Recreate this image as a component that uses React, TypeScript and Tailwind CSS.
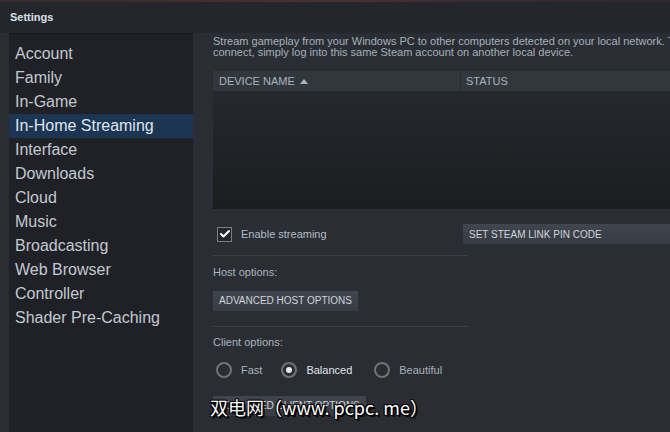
import { Check } from 'lucide-react';

const secciones = [
  'Account',
  'Family',
  'In-Game',
  'In-Home Streaming',
  'Interface',
  'Downloads',
  'Cloud',
  'Music',
  'Broadcasting',
  'Web Browser',
  'Controller',
  'Shader Pre-Caching',
];

function Radio({ label, checked, className = '' }: { label: string; checked?: boolean; className?: string }) {
  return (
    <div className={`flex items-center ${className}`}>
      <span className="w-[16px] h-[16px] rounded-full border-2 border-[#6f737a] flex items-center justify-center">
        {checked && <span className="w-[6px] h-[6px] rounded-full bg-[#e8eaec]" />}
      </span>
      <span className={`ml-[9px] text-[11px] ${checked ? 'text-[#e2e5e8]' : 'text-[#a9b2bd]'}`}>{label}</span>
    </div>
  );
}

function Boton({ children, className = '' }: { children: React.ReactNode; className?: string }) {
  return (
    <div
      className={`h-[20px] flex items-center px-[6px] text-[10px] text-[#d0d4d8] bg-gradient-to-b from-[#40454e] to-[#373c44] ${className}`}
    >
      {children}
    </div>
  );
}

export default function App() {
  return (
    <div className="w-[670px] h-[432px] overflow-hidden bg-[#2a2d34] font-['Liberation_Sans',Arial,sans-serif] relative">
      <div className="h-[2px] bg-gradient-to-r from-[#3b2a2a] via-[#4a3030] to-[#2d2530]" />
      <div className="h-[31px] bg-[#23262c] flex items-center pl-[10px]">
        <span className="text-[11px] font-bold text-[#dce0e4]">Settings</span>
      </div>

      <div className="flex h-[399px]">
        <div className="w-[9px] shrink-0" />
        <div className="w-[184px] shrink-0 bg-[#1f2126] border-t border-[#16181b] pt-[8px]">
          {secciones.map((s) => (
            <div
              key={s}
              className={`h-[24px] flex items-center pl-[6px] text-[16px] ${
                s === 'In-Home Streaming' ? 'bg-[#1b3552] text-[#dfe6ee]' : 'text-[#c2c9d1]'
              }`}
            >
              {s}
            </div>
          ))}
        </div>

        <div className="flex-1 pl-[20px] pt-[3px] overflow-hidden">
          <p className="text-[11px] leading-[11px] text-[#a6b0bb] whitespace-nowrap">
            Stream gameplay from your Windows PC to other computers detected on your local network. To
            <br />
            connect, simply log into this same Steam account on another local device.
          </p>

          <div className="mt-[13px] h-[20px] bg-[#32363d] flex items-center text-[11px] text-[#a9b3be]">
            <div className="w-[247px] pl-[6px] flex items-center gap-[5px]">
              DEVICE NAME
              <svg width="8" height="5" viewBox="0 0 8 5">
                <path d="M0 5 L4 0 L8 5 Z" fill="#a9b3be" />
              </svg>
            </div>
            <div className="h-full w-px bg-[#272a30]" />
            <div className="pl-[5px]">STATUS</div>
          </div>
          <div className="h-[119px] bg-gradient-to-b from-[#25282d] to-[#1b1d20] border-b border-[#30343a]" />

          <div className="mt-[14px] flex items-center">
            <div className="w-[250px] flex items-center pl-[4px]">
              <span className="w-[15px] h-[15px] border border-[#7c8086] bg-[#23262b] flex items-center justify-center">
                <Check className="w-[12px] h-[12px] text-white" strokeWidth={4} />
              </span>
              <span className="ml-[9px] text-[11px] text-[#b3bcc6]">Enable streaming</span>
            </div>
            <Boton className="flex-1">SET STEAM LINK PIN CODE</Boton>
          </div>

          <div className="mt-[11px] w-[255px] h-px bg-[#3c4047]" />
          <div className="mt-[8px] text-[11px] text-[#aab3bd]">Host options:</div>
          <div className="mt-[10px] flex">
            <Boton>ADVANCED HOST OPTIONS</Boton>
          </div>

          <div className="mt-[15px] w-[255px] h-px bg-[#3c4047]" />
          <div className="mt-[7px] text-[11px] text-[#aab3bd]">Client options:</div>
          <div className="mt-[12px] flex items-center pl-[3px]">
            <Radio label="Fast" />
            <Radio label="Balanced" checked className="ml-[19px]" />
            <Radio label="Beautiful" className="ml-[22px]" />
          </div>
          <div className="mt-[17px] flex">
            <Boton>ADVANCED CLIENT OPTIONS</Boton>
          </div>
        </div>
      </div>

      <div
        className="absolute left-[210px] top-[395px] text-[18px] text-white font-['Noto_Sans_CJK_SC',sans-serif] leading-[24px] [text-shadow:1px_1px_0_#000,-1px_-1px_0_#000,1px_-1px_0_#000,-1px_1px_0_#000,2px_2px_1px_#000]"
      >
        双电网（www. pcpc. me）
      </div>
    </div>
  );
}
